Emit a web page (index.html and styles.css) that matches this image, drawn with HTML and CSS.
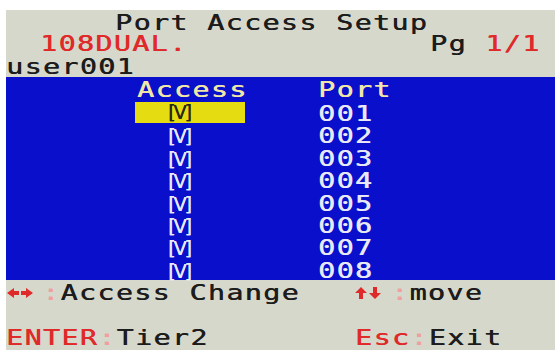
FILE: index.html
```html
<!DOCTYPE html>
<html>
<head>
<meta charset="utf-8">
<link rel="stylesheet" href="styles.css">
</head>
<body>
<div class="screen">
  <div class="line title"><span class="t">Port Access Setup</span></div>
  <div class="line info">
    <div class="left"><span class="t red">108DUAL.</span></div>
    <span class="t">Pg <span class="red">1/1</span></span>
  </div>
  <div class="line user"><span class="t">user001</span></div>
  <div class="table">
    <div class="trow head">
      <div class="acc"><span class="t">Access</span></div>
      <div class="port"><span class="t">Port</span></div>
    </div>
    <div class="trow sel">
      <div class="acc"><span class="v">[V]</span></div>
      <div class="port"><span class="t">001</span></div>
    </div>
    <div class="trow">
      <div class="acc"><span class="v">[V]</span></div>
      <div class="port"><span class="t">002</span></div>
    </div>
    <div class="trow">
      <div class="acc"><span class="v">[V]</span></div>
      <div class="port"><span class="t">003</span></div>
    </div>
    <div class="trow">
      <div class="acc"><span class="v">[V]</span></div>
      <div class="port"><span class="t">004</span></div>
    </div>
    <div class="trow">
      <div class="acc"><span class="v">[V]</span></div>
      <div class="port"><span class="t">005</span></div>
    </div>
    <div class="trow">
      <div class="acc"><span class="v">[V]</span></div>
      <div class="port"><span class="t">006</span></div>
    </div>
    <div class="trow">
      <div class="acc"><span class="v">[V]</span></div>
      <div class="port"><span class="t">007</span></div>
    </div>
    <div class="trow">
      <div class="acc"><span class="v">[V]</span></div>
      <div class="port"><span class="t">008</span></div>
    </div>
  </div>
  <div class="line foot1">
    <div class="left">
      <svg class="arr" width="36" height="12" viewBox="0 0 36 12">
        <polygon points="1,6 8,1 8,4 13,4 13,8 8,8 8,11" fill="#e02a2a"/>
        <polygon points="27,6 20,1 20,4 15,4 15,8 20,8 20,11" fill="#e02a2a"/>
      </svg><span class="t"><span class="col">:</span>Access Change</span>
    </div>
    <svg class="arr" width="36" height="12" viewBox="0 0 36 12">
      <polygon points="6,0 12,6 8,6 8,12 4,12 4,6 0,6" fill="#e02a2a"/>
      <polygon points="20,12 26,6 22,6 22,0 18,0 18,6 14,6" fill="#e02a2a"/>
    </svg><span class="t"><span class="col">:</span>move</span>
  </div>
  <div class="line foot2">
    <div class="left"><span class="t"><span class="red">ENTER</span><span class="col">:</span>Tier2</span></div>
    <span class="t"><span class="red">Esc</span><span class="col">:</span>Exit</span>
  </div>
</div>
</body>
</html>
```

FILE: styles.css
```css
html, body {
  margin: 0;
  padding: 0;
  background: #ffffff;
}
.screen {
  margin: 10px 0 0 6px;
  width: 549px;
  height: 340px;
  background: #d6d8cc;
  font-family: "DejaVu Sans Mono", monospace;
  font-size: 21px;
  color: #1c1c1c;
  overflow: hidden;
}
.t {
  display: inline-block;
  transform: scaleX(1.35);
  transform-origin: left center;
  letter-spacing: 1px;
  white-space: pre;
  text-shadow: 0.4px 0 0 currentColor;
}
.line {
  display: flex;
  height: 22px;
  line-height: 22px;
}
.title {
  padding-left: 109px;
  margin-top: 2px;
}
.info {
  padding-left: 34px;
  height: 21px;
  line-height: 21px;
}
.info .left {
  width: 390px;
}
.user {
  margin-top: 2px;
  height: 20px;
  line-height: 20px;
}
.red {
  color: #e02a2a;
}
.col {
  color: #eea0a0;
}
.table {
  background: #0a0fcb;
  height: 203px;
  padding-top: 2px;
  box-sizing: border-box;
}
.trow {
  display: flex;
  padding-left: 129px;
  height: 22.4px;
  line-height: 22px;
  color: #e8e8f6;
}
.trow.head {
  height: 24px;
  color: #f0e6a8;
}
.acc {
  width: 110px;
  padding-left: 2px;
  box-sizing: border-box;
}
.port {
  margin-left: 73px;
}
.v {
  display: inline-block;
  padding-left: 31px;
  letter-spacing: -2px;
  font-family: "DejaVu Sans", sans-serif;
  font-size: 19px;
  line-height: 21px;
  white-space: pre;
  text-shadow: 0.4px 0 0 currentColor;
}
.sel .acc {
  background: #e6dc12;
  color: #2a2a10;
  height: 21px;
  line-height: 21px;
  margin-top: -1px;
}
.foot1 {
  margin-top: 2px;
  align-items: center;
}
.foot1 .left {
  width: 349px;
  display: flex;
  align-items: center;
}
.arr {
  flex: none;
}
.foot2 {
  margin-top: 24px;
  height: 21px;
  line-height: 21px;
}
.foot2 .left {
  width: 349px;
}
```
